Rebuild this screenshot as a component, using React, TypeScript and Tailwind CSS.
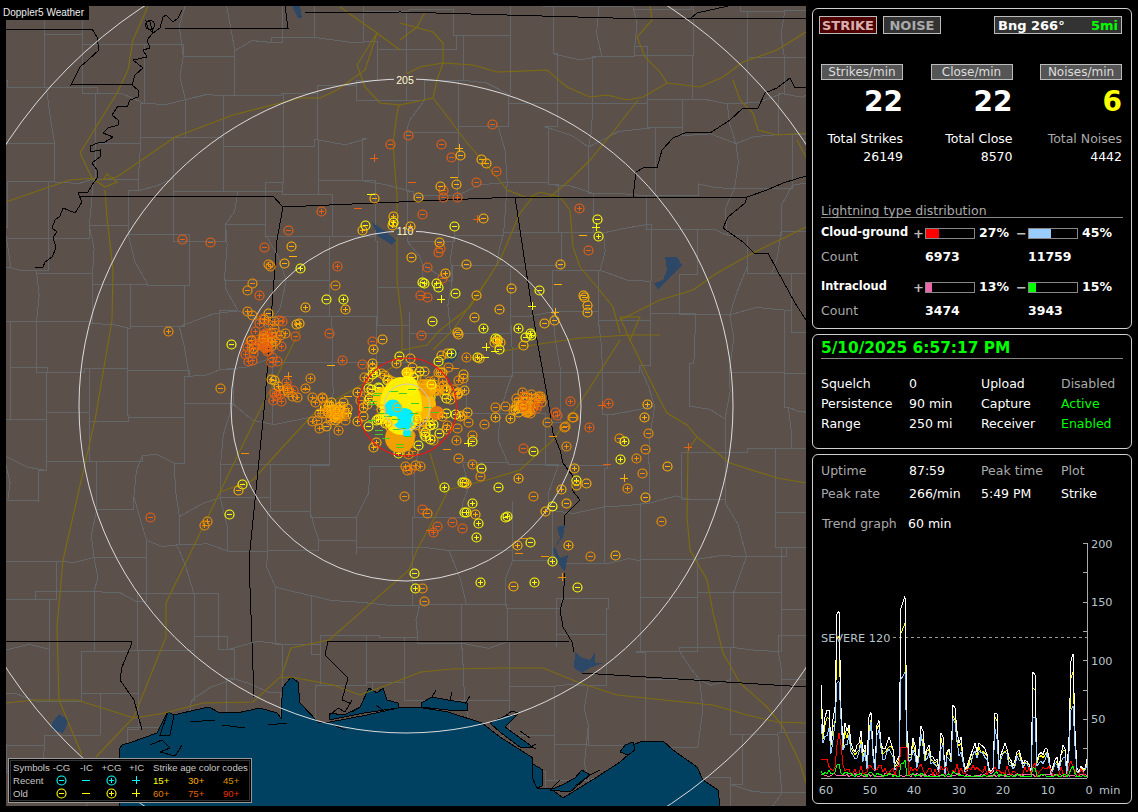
import React from "react";

type Mark = [number, number, string, string];

// simple seeded random so the picture stays the same
function rng(seed: number) {
  let s = seed;
  return () => {
    s = (s + 0x6d2b79f5) | 0;
    let t = Math.imul(s ^ (s >>> 15), 1 | s);
    t = (t + Math.imul(t ^ (t >>> 7), 61 | t)) ^ t;
    return ((t ^ (t >>> 14)) >>> 0) / 4294967296;
  };
}

const COLORS: Record<string, string> = {
  Y: "#ffff00",
  G: "#ffb000",
  O: "#f09000",
  R: "#e86010",
  C: "#00ffff",
};

const MARKS_RAW =
  // far north and west
  "390,144,m,R 374,158,c,R 358,208,d,R 321,211,p,R 288,230,m,R 264,247,m,R 210,242,m,R 182,239,m,R 268,264,p,O 270,266,p,O 337,266,p,R 291,246,m,G 293,256,d,G 284,263,m,G 374,198,m,G 362,230,p,G 393,216,p,G 392,225,p,G 371,194,d,Y 300,268,p,Y 365,225,m,Y 393,222,p,Y " +
  // north of the core
  "492,124,m,R 408,135,m,R 441,144,m,R 451,157,m,R 496,171,m,R 412,182,d,R 476,182,m,R 443,190,m,R 443,197,m,R 457,197,p,R 422,214,m,R 477,219,c,R 438,252,m,R 440,248,m,R 427,267,m,R 442,278,m,R 420,295,m,R 427,297,m,R 421,335,m,R 579,208,p,R 588,250,m,R " +
  "459,148,c,G 460,155,m,G 481,159,m,G 486,163,m,G 454,177,d,G 456,184,m,G 440,186,m,G 418,197,m,G 483,218,m,G 410,226,p,G 439,242,m,G 411,257,m,G 466,264,m,G 445,273,p,G 476,295,m,G 511,288,m,G 560,264,m,G 558,284,d,G 583,235,d,G 583,295,m,G 584,297,m,G 587,305,m,G 587,312,m,G 554,320,m,G 555,312,c,G 544,323,m,G 474,317,m,G 499,309,m,G 457,332,m,G 458,334,m,G " +
  "454,226,m,Y 422,282,m,Y 424,283,p,Y 436,283,p,Y 438,287,m,Y 455,293,m,Y 441,299,c,Y 539,290,m,Y 532,306,c,Y 597,219,m,Y 596,227,c,Y 598,236,p,Y 432,321,m,Y 483,328,p,Y 518,328,p,Y 530,333,p,Y 531,335,p,Y 525,337,m,Y 495,338,p,Y 497,339,p,Y " +
  // left side
  "247,290,m,O 252,283,m,O 259,295,p,R 268,313,m,G 263,318,m,R 247,311,p,O 252,315,m,O 282,321,p,R 296,324,p,G 299,323,p,G 329,333,m,R 295,336,m,R 285,333,p,O 231,344,m,Y 277,361,m,R 248,361,p,R 372,341,m,R 373,349,p,G 342,360,p,R 331,365,d,G 310,378,p,O 288,376,c,O 220,388,m,O 306,389,d,O 273,400,p,R 297,397,p,O 326,299,m,Y 343,299,p,Y 305,307,p,G 345,309,p,G 168,331,p,O " +
  "320,410,c,Y 348,413,c,Y 326,426,m,G 357,392,p,G 348,396,d,G 312,397,p,O 322,397,p,O 315,402,p,O 325,405,m,O 328,412,p,O 330,420,m,O 362,364,m,R 372,363,p,G 372,368,m,G 364,377,m,O 381,373,m,O 363,407,p,G 367,404,p,G 363,416,m,G 360,400,m,O " +
  // right side
  "495,407,m,O 505,406,m,O 495,417,p,G 513,410,m,O 510,418,p,G 540,398,m,O 570,401,p,R 557,415,p,R 555,412,m,R 547,422,m,O 572,417,m,O 565,426,m,O 553,436,d,O 566,446,p,O 533,451,m,Y 523,448,m,R 589,427,p,R 608,403,p,R 602,405,c,R " +
  "462,415,p,O 468,422,m,O 484,424,m,O 457,428,m,O 472,435,m,O 456,440,p,O 468,443,c,Y 447,449,d,O 458,458,m,O 472,464,p,O 481,468,m,Y 480,476,m,O 518,478,p,G 498,487,m,Y 462,482,p,Y 464,482,m,Y 466,483,p,G 444,487,p,Y 533,496,m,O " +
  "497,341,p,G 500,342,p,G 494,342,m,G 523,345,m,G 499,349,m,Y 486,347,c,Y 495,351,d,Y 477,357,p,Y 479,358,p,G 485,357,d,Y 466,357,p,O 447,353,p,G 441,355,m,G 438,361,m,Y 455,368,d,O 448,367,m,O " +
  // south east
  "647,404,p,G 644,417,p,G 648,433,m,O 619,438,m,O 624,441,p,Y 645,449,m,O 620,459,p,Y 636,458,p,O 607,464,d,R 667,466,m,G 642,473,m,O 624,478,c,G 627,488,p,O 645,497,m,G 661,521,m,O 688,447,c,R " +
  "573,417,m,O 564,427,m,O 574,468,p,G 576,480,p,Y 576,485,m,G 586,483,m,G 561,489,p,G 566,503,m,G 552,506,m,Y 545,511,p,G 507,516,p,Y 505,517,m,Y 517,545,p,G 530,542,m,Y 525,538,d,O 519,553,d,O 568,545,p,G 590,556,m,O 615,555,m,G 552,561,p,Y 545,556,d,O 562,577,c,O 577,587,m,Y 534,582,p,Y 513,586,m,G " +
  // south
  "414,573,m,Y 415,588,p,Y 422,588,m,O 424,601,m,O 480,582,p,Y 404,496,m,O 422,509,m,R 427,513,m,O 464,512,m,Y 466,512,p,Y 472,503,p,Y 475,514,p,G 452,522,m,R 462,528,m,R 478,523,p,Y 476,537,p,Y 437,526,m,R 433,532,p,R 430,530,d,R 229,514,m,Y 242,484,m,Y 238,490,m,G 245,453,d,O 405,466,p,O 410,469,p,R 415,465,p,O 420,466,p,O 407,470,m,O 204,525,p,O 207,521,p,O 150,517,m,R 413,451,m,O 439,433,m,Y 447,425,p,O 433,440,m,O 322,398,p,O 335,285,m,O";

const R = rng(42);
function gauss() {
  return (R() + R() + R() + R() - 2) / 0.58;
}

function buildMarks(): Mark[] {
  const out: Mark[] = MARKS_RAW.trim()
    .split(/\s+/)
    .map((s) => {
      const [x, y, t, c] = s.split(",");
      return [Number(x), Number(y), t, c];
    });
  const pick = (a: string[]) => a[Math.floor(R() * a.length)];
  const clusters: [number, number, number, number, string[]][] = [
    [263, 342, 9, 50, ["R", "R", "O"]],
    [281, 388, 8, 16, ["O", "R", "G"]],
    [337, 412, 5, 36, ["G", "G", "O"]],
    [326, 415, 6, 10, ["G", "O"]],
    [527, 405, 6, 34, ["O", "G", "O"]],
    [530, 400, 11, 8, ["O", "R"]],
    // ring of marks round the core
    [408, 405, 24, 110, ["G", "O", "G", "Y", "Y"]],
    [440, 385, 12, 16, ["G", "O"]],
  ];
  clusters.forEach(([x, y, sd, n, cols]) => {
    for (let i = 0; i < n; i++) out.push([x + gauss() * sd, y + gauss() * sd, pick(["m", "p"]), pick(cols)]);
  });
  return out;
}
const MARKS = buildMarks();

function Symbol({ x, y, t, c }: { x: number; y: number; t: string; c: string }) {
  return (
    <g stroke={c} strokeWidth={1} fill="none">
      {(t === "m" || t === "p") && <circle cx={x + 0.5} cy={y + 0.5} r={4.5} strokeWidth={1.15} shapeRendering="auto" />}
      {t === "m" && <line x1={x - 2} y1={y + 0.5} x2={x + 3} y2={y + 0.5} />}
      {t === "p" && (
        <>
          <line x1={x - 2} y1={y + 0.5} x2={x + 3} y2={y + 0.5} />
          <line x1={x + 0.5} y1={y - 2} x2={x + 0.5} y2={y + 3} />
        </>
      )}
      {t === "d" && <line x1={x - 4} y1={y + 0.5} x2={x + 4} y2={y + 0.5} />}
      {t === "c" && (
        <>
          <line x1={x - 4} y1={y + 0.5} x2={x + 4} y2={y + 0.5} />
          <line x1={x + 0.5} y1={y - 4} x2={x + 0.5} y2={y + 4} />
        </>
      )}
    </g>
  );
}

// county grid: jittered vertices joined with little steps
function countyPaths() {
  const r = rng(7);
  const step = 46;
  const n = 18;
  const pts: [number, number][][] = [];
  for (let j = 0; j <= n; j++) {
    const row: [number, number][] = [];
    for (let i = 0; i <= n; i++) {
      row.push([i * step + (r() - 0.5) * 24, j * step + (r() - 0.5) * 24]);
    }
    pts.push(row);
  }
  const segs: string[] = [];
  const wiggle = (a: [number, number], b: [number, number]) => {
    if (r() < 0.12) return;
    const k = r();
    if (k < 0.3) {
      const mx = (a[0] + b[0]) / 2 + (r() - 0.5) * 12;
      const my = (a[1] + b[1]) / 2 + (r() - 0.5) * 12;
      segs.push(`M${a[0]} ${a[1]}L${mx} ${my}L${b[0]} ${b[1]}`);
    } else if (k < 0.65) {
      segs.push(`M${a[0]} ${a[1]}L${b[0]} ${a[1]}L${b[0]} ${b[1]}`);
    } else {
      segs.push(`M${a[0]} ${a[1]}L${a[0]} ${b[1]}L${b[0]} ${b[1]}`);
    }
  };
  for (let j = 0; j <= n; j++) {
    for (let i = 0; i <= n; i++) {
      if (i < n) wiggle(pts[j][i], pts[j][i + 1]);
      if (j < n) wiggle(pts[j][i], pts[j + 1][i]);
    }
  }
  return segs.join("");
}
const COUNTIES = countyPaths();

const BORDERS = [
  "M6 29L92 29L97 37L99 50L88 60L80 67L71 85L101 84L132 84",
  "M165 28L288 28L285 6",
  "M305 13L400 12L613 18L806 18",
  "M690 19L697 13L728 6",
  "M80 196L273 196L283 207L515 197L747 197L767 190L783 183L806 176",
  "M283 207L277 240L265 400L249 560L254 697",
  "M515 197L520 230L528 283L537 340L548 400L553 433L560 450L563 463L572 475L572 490L580 500L565 515L564 525",
  "M565 573L563 600L560 610L563 627L572 642L574 652",
  "M328 641L500 642L570 641",
  "M582 673L806 687",
  "M6 641L131 641L132 643L122 667L120 680L134 700L142 730",
  "M328 641L325 655L337 667L348 678L342 700L350 703",
  "M633 197L636 172L645 167L657 168L662 150L673 138L687 132L710 133L730 120L743 108L758 108L765 93L777 88L790 78L795 88L806 87",
  "M747 197L745 203L728 217L723 228L743 242L755 254L768 253L777 270L795 303L806 320",
];

const RIVER =
  "M182 10L178 18L173 22L166 15L163 17L160 28L153 33L150 22L146 21L148 28L153 33L147 40L150 48L143 50L147 57L133 60L138 64L143 68L135 75L132 85L138 90L138 97L130 100L127 107L118 106L112 115L118 120L118 125L108 128L103 133L113 137L105 142L98 143L90 146L90 152L100 150L100 157L92 163L97 170L98 177L92 185L88 192L78 193L82 202L75 213L63 208L60 216L55 220L52 228L57 232L53 237L56 248L52 257L45 262L43 267L35 268";

const HIGHWAYS = [
  "M400 77L420 67L443 63L473 65L497 72L547 70L567 87L590 97L607 95L627 100L643 97L667 83L700 87L723 77L743 62L777 50L806 32",
  "M650 6L652 20L637 37L645 57L660 72L667 83",
  "M638 100L617 127L590 160L570 180L550 197L533 197L520 213L500 260L470 307L440 330L427 345L402 350",
  "M425 12L417 27L400 40M400 23L433 32L443 43L443 63L437 80L433 98L400 105M433 98L450 120L467 143L497 177L507 190L528 198L540 192L560 197L570 210L573 247L580 267L597 287L613 307L620 333",
  "M620 320L660 300L693 290L717 273L753 253L806 227",
  "M733 80L740 100L753 113L758 130L777 135L806 133M797 140L806 157",
  "M620 317L640 317L630 340L620 317",
  "M487 280L453 330L433 350M220 492L253 480L280 450L317 410L393 367L402 350",
  "M500 352L533 345L580 338L630 335L660 335",
  "M397 280L402 323L402 350",
  "M430 453L440 487L447 493L437 513L417 550L409 570L329 640L291 648L281 677",
  "M447 490L487 480L520 470L553 440L582 400L620 340",
  "M630 340L650 380L660 400L667 413L687 425L697 437L688 450L687 517L690 550L707 580L713 613L723 653L740 683L767 707L783 727L800 763L806 783",
  "M697 437L730 463L777 478L806 483",
  "M6 703L34 700L77 700L134 718L165 713L203 703L253 702L279 678L291 677L333 685L360 695L387 685L421 672L452 669L500 668L543 668L580 683L617 695L683 702L713 705L747 715L777 722L806 723",
  "M63 560L57 627L59 700L82 755",
  "M187 560L166 603L166 637L134 717L96 757",
  "M6 202L40 190L70 180L95 178",
  "M100 180L117 177L175 137L233 115L300 98L320 98L337 90L365 70L377 33",
  "M148 6L133 40L128 70L117 93L80 153L92 178L105 187L117 182L107 174L103 180M105 190L107 217L113 270L112 320L95 420L63 560",
  "M340 7L377 33L400 50M377 33L357 65L365 87L380 103L400 105L398 107L393 143L397 197L397 280",
  "M300 330L250 430L187 560",
];

const SEA =
  "M119 806L119 750L122 745L132 742L157 733L165 717L168 712L174 715L195 710L209 707L218 712L237 713L260 708L277 713L281 718L281 710L283 687L291 677L298 682L300 703L318 722L325 723L367 715L398 708L417 707L448 712L482 723L500 737L533 758L532 777L537 788L550 788L563 798L597 777L620 762L628 755L628 747L640 742L663 741L673 750L697 767L703 780L718 790L720 806Z";

const BAYS = [
  "M329 720L329 713L344 715L360 707L369 688L377 693L383 688L387 700L398 703L398 708L364 713Z",
  "M421 707L421 703L432 697L448 700L467 703L467 710L448 710Z",
  "M490 723L505 716L517 715L505 727L534 748L520 747L501 733Z",
  "M533 764L543 770L542 786L537 788L532 777Z",
  "M160 735L168 712L174 715L170 735Z",
  "M550 790L562 785L575 778L582 770L590 775L570 792Z",
  "M628 755L620 752L625 745L633 742L635 750Z",
];

const COAST_BITS = [
  "M222 725L245 728M268 725L287 723M150 745L162 740L170 748L160 752L175 756L182 745L178 752M190 722L215 720M332 724L345 730",
  "M329 716L338 708L345 712L352 700M360 707L352 712M376 705L385 712M432 697L436 690M450 700L452 692M465 704L470 696M505 716L512 711L518 713M520 731L530 738M528 748L536 744M550 790L560 780M575 786L590 775L600 770",
];

const LAKES = [
  "M665 257L677 257L682 265L670 277L658 290L654 283L663 280L667 270Z",
  "M52 723L59 714L69 720L63 733L52 730Z",
  "M372 222L386 232L396 240L392 245L378 236Z",
  "M452 352L459 350L457 358L450 364L444 362Z",
  "M557 527L565 525L563 537L555 547L560 558L568 555L565 572L558 563L553 550L560 538Z",
  "M575 652L580 657L590 660L595 652L595 663L603 663L590 668L582 673L574 668Z",
  "M292 6L300 6L302 18L298 18Z",
];

const WHITE = [
  80, 38, 52, 58, 58, 30, 50, 60, 140, 142, 60, 30, 47, 40, 45, 30, 25, 22, 28, 30, 40, 22, 28, 12, 52, 56, 25, 8, 45, 49, 30, 25, 25, 30, 35, 30,
  25, 12, 15, 18, 145, 150, 155, 40, 20, 20, 34, 28, 12, 25, 44, 40, 20, 25, 28, 18, 18, 15, 16, 8, 38, 35, 5, 22, 25, 18, 62, 60, 40, 30, 35, 18,
  8, 10, 15, 20, 25, 30, 22, 30, 28, 27, 25, 20, 8, 5, 8, 55, 55, 10, 20, 25, 30, 25, 18, 15, 10, 15, 22, 24, 18, 12, 15, 14, 12, 5, 90, 88, 15, 20,
  22, 20, 25, 25, 18, 5, 10, 15, 18, 8, 20, 28, 25, 5, 35, 100, 106, 40, 8, 5, 10, 8, 8, 16,
];

const X0 = 822;
const Y0 = 777;
const sx = (i: number) => X0 + (i * 266) / (WHITE.length - 1);
const sy = (v: number) => Y0 - v * 1.173;
const line = (vals: number[]) => vals.map((v, i) => `${sx(i).toFixed(1)},${sy(v).toFixed(1)}`).join(" ");

const r2 = rng(11);
const YELLOW = WHITE.map((v) => (v > 70 ? v * 0.85 : v * (0.75 + r2() * 0.22)));
const BLUE = WHITE.map((v) => (v > 70 ? v * 0.58 : v * (0.6 + r2() * 0.25)));
const RED = WHITE.map((v, i) => {
  if (i > 7 && i < 11) return 38 - Math.abs(i - 9) * 10;
  if (i > 39 && i < 44) return 26;
  if (i < 4) return 16;
  return Math.max(1, r2() * 9 + v * 0.08);
});
const GREEN = WHITE.map((v) => Math.max(1, v * 0.09 + r2() * 3 - 1.5));
const PINK = WHITE.map(() => 1 + r2() * 3);

function Btn({ className, children }: { className: string; children: React.ReactNode }) {
  return <div className={`flex h-[18px] items-center border border-[#bbbbbb] text-[13px] font-bold leading-none ${className}`}>{children}</div>;
}

function StatCol({ head, big, bigColor, label, value, labelColor }: { head: string; big: string; bigColor: string; label: string; value: string; labelColor: string }) {
  return (
    <div className="flex w-[82px] flex-col items-end">
      <div className="flex h-[16px] w-full items-center justify-center border border-[#bbbbbb] bg-[#555555] text-[12px] leading-none text-[#dddddd]">{head}</div>
      <div className={`mt-[5px] h-[34px] text-[28px] font-bold leading-[34px] ${bigColor}`}>{big}</div>
      <div className={`mt-[11px] h-[18px] whitespace-nowrap text-[12.5px] leading-[18px] ${labelColor}`}>{label}</div>
      <div className="h-[18px] text-[12.5px] leading-[18px] text-white">{value}</div>
    </div>
  );
}

function Dist({ sign, pct, color, width }: { sign: string; pct: string; color: string; width: string }) {
  return (
    <div className="flex w-[103px] items-center">
      <span className="w-[13px] text-center text-[13px] font-bold leading-none text-[#bbbbbb]">{sign}</span>
      <div className="h-[11px] w-[50px] border border-[#888888]">
        <div className={`h-full ${color} ${width}`} />
      </div>
      <span className="ml-[4px] text-[12.5px] font-bold leading-none text-white">{pct}</span>
    </div>
  );
}

function TypeRows({ name, a, b, countA, countB }: { name: string; a: React.ReactNode; b: React.ReactNode; countA: string; countB: string }) {
  return (
    <div className="flex flex-col">
      <div className="flex h-[18px] items-center">
        <div className="w-[91px] whitespace-nowrap text-[11.4px] font-bold leading-none text-white">{name}</div>
        {a}
        {b}
      </div>
      <div className="mt-[6px] flex h-[18px] items-center text-[12.5px] font-bold leading-none">
        <div className="w-[104px] font-normal text-[#aaaaaa]">Count</div>
        <div className="w-[103px] text-white">{countA}</div>
        <div className="text-white">{countB}</div>
      </div>
    </div>
  );
}

function InfoRow({ cells, h }: { cells: [string, string][]; h: string }) {
  const widths = ["w-[88px]", "w-[72px]", "w-[80px]", ""];
  return (
    <div className={`flex items-center text-[12.5px] leading-none ${h}`}>
      {cells.map(([t, c], i) => (
        <div key={i} className={`whitespace-nowrap ${widths[i]} ${c}`}>
          {t}
        </div>
      ))}
    </div>
  );
}

function LegendSym({ t, c }: { t: string; c: string }) {
  return (
    <svg width="12" height="12" viewBox="0 0 12 12" className="mx-auto" shapeRendering="crispEdges">
      <Symbol x={5} y={5} t={t} c={c} />
    </svg>
  );
}

function Legend() {
  const label = "whitespace-nowrap text-[#c8c8c8]";
  return (
    <div className="absolute bottom-[3px] left-[2px] h-[45px] w-[244px] border border-[#999999] bg-black p-[1px] font-['Liberation_Sans',sans-serif] text-[9.6px] leading-[13px]">
      <div className="grid h-full grid-cols-[36px_25px_25px_25px_25px_35px_35px_25px] items-center border border-[#333333] pl-[2px]">
        <div className={label}>Symbols</div>
        <div className={`${label} text-center`}>-CG</div>
        <div className={`${label} text-center`}>-IC</div>
        <div className={`${label} text-center`}>+CG</div>
        <div className={`${label} text-center`}>+IC</div>
        <div className={`${label} col-span-3 pl-[4px]`}>Strike age color codes</div>
        <div className={label}>Recent</div>
        <LegendSym t="m" c="#00ffff" />
        <LegendSym t="d" c="#00ffff" />
        <LegendSym t="p" c="#00ffff" />
        <LegendSym t="c" c="#00ffff" />
        <div className="pl-[4px] text-[#ffff00]">15+</div>
        <div className="pl-[4px] text-[#ffb000]">30+</div>
        <div className="pl-[4px] text-[#d89000]">45+</div>
        <div className={label}>Old</div>
        <LegendSym t="m" c="#ffff00" />
        <LegendSym t="d" c="#ffff00" />
        <LegendSym t="p" c="#ffff00" />
        <LegendSym t="c" c="#ffff00" />
        <div className="pl-[4px] text-[#e08000]">60+</div>
        <div className="pl-[4px] text-[#e06000]">75+</div>
        <div className="pl-[4px] text-[#e83000]">90+</div>
      </div>
    </div>
  );
}

function RadarMap() {
  const r3 = rng(99);
  const greens = Array.from({ length: 24 }, () => {
    const a = r3() * Math.PI * 2;
    const d = Math.sqrt(r3()) * 36;
    return [402 + Math.cos(a) * d, 412 + Math.sin(a) * d];
  });
  const r4 = rng(5);
  // a few rings that sit on top of the solid core
  const top = Array.from({ length: 20 }, () => {
    const a = r4() * Math.PI * 2;
    const d = 14 + r4() * 24;
    return [418 + Math.cos(a) * d, 402 + Math.sin(a) * d];
  });
  return (
    <svg viewBox="6 6 800 800" className="block h-[800px] w-[800px]" shapeRendering="crispEdges">
      <rect x="6" y="6" width="800" height="800" fill="#5c504b" />
      <path d={COUNTIES} fill="none" stroke="#63676a" strokeWidth="1" />
      <path d={SEA} fill="#004060" stroke="#000000" strokeWidth="1" />
      {BAYS.map((d, i) => (
        <path key={i} d={d} fill="#004060" stroke="#000000" strokeWidth="1" />
      ))}
      {COAST_BITS.map((d, i) => (
        <path key={i} d={d} fill="none" stroke="#000000" strokeWidth="1" />
      ))}
      {LAKES.map((d, i) => (
        <path key={i} d={d} fill="#2c4866" />
      ))}
      {HIGHWAYS.map((d, i) => (
        <path key={i} d={d} fill="none" stroke="#7d6c10" strokeWidth="1.15" shapeRendering="auto" />
      ))}
      {BORDERS.map((d, i) => (
        <path key={i} d={d} fill="none" stroke="#000000" strokeWidth="1" />
      ))}
      <path d={RIVER} fill="none" stroke="#000000" strokeWidth="1" />
      <circle cx="150" cy="25" r="4.5" fill="none" stroke="#000000" />
      <g fill="none" stroke="#dcdcdc" strokeWidth="1" shapeRendering="auto">
        <circle cx="406" cy="406" r="478" />
        <circle cx="406" cy="406" r="327" />
        <circle cx="406" cy="406" r="175" />
      </g>
      <rect x="394" y="74" width="22" height="12" fill="#5c504b" />
      <rect x="394" y="225" width="22" height="12" fill="#5c504b" />
      <text x="405" y="84" textAnchor="middle" fontFamily="Liberation Sans, sans-serif" fontSize="10.5" fill="#ffffd0">205</text>
      <text x="405" y="235" textAnchor="middle" fontFamily="Liberation Sans, sans-serif" fontSize="10.5" fill="#ffffd0">110</text>
      {MARKS.map(([x, y, t, c], i) => (
        <Symbol key={i} x={Math.round(x)} y={Math.round(y)} t={t} c={COLORS[c]} />
      ))}
      {/* storm core */}
      <g shapeRendering="auto">
        <circle cx="400" cy="438" r="15" fill="#f0a000" />
        <circle cx="421" cy="405" r="15" fill="#ffb800" />
        <circle cx="437" cy="413" r="7" fill="#e87a10" />
        <circle cx="384" cy="398" r="11" fill="#ffc800" />
        <circle cx="428" cy="388" r="9" fill="#f0a000" />
        <ellipse cx="401" cy="406" rx="21" ry="29" fill="#ffee00" />
        <circle cx="408" cy="373" r="6" fill="#ffc000" />
        <circle cx="408" cy="386" r="10" fill="#ffee00" />
        <circle cx="393" cy="408" r="8.5" fill="#00eeff" />
        <circle cx="404" cy="419" r="11" fill="#00eeff" />
        <circle cx="407" cy="433" r="4" fill="#00eeff" />
        <circle cx="394" cy="420" r="4" fill="#ffee00" />
      </g>
      {top.map(([x, y], i) => (
        <Symbol key={i} x={Math.round(x)} y={Math.round(y)} t={i % 2 ? "m" : "p"} c={i % 3 ? "#ffb000" : "#ffff00"} />
      ))}
      {greens.map(([x, y], i) => (
        <Symbol key={i} x={Math.round(x)} y={Math.round(y)} t="d" c="#40d020" />
      ))}
      <circle cx="407" cy="407" r="23" fill="none" stroke="#c8c8c8" strokeWidth="1" shapeRendering="auto" />
      <circle cx="407.5" cy="407" r="49" fill="none" stroke="#ff1010" strokeWidth="1.2" shapeRendering="auto" />
    </svg>
  );
}

function Trend() {
  const ticks = [0, 25, 50, 75, 100, 125, 150, 175, 200];
  const font = { fontFamily: "DejaVu Sans, sans-serif", fontSize: 11.3, fill: "#b8c4cc" };
  return (
    <svg viewBox="814 534 316 266" className="block h-[266px] w-[316px]">
      <g strokeWidth="1" fill="none" shapeRendering="crispEdges">
        <line x1="1088" y1="542" x2="1088" y2="777" stroke="#aaaaaa" />
        {ticks.map((v) => (
          <line key={v} x1="1084" y1={sy(v)} x2="1088" y2={sy(v)} stroke="#aaaaaa" />
        ))}
        <line x1="822" y1="777" x2="1088" y2="777" stroke="#aaaaaa" />
        <line x1="894" y1="636" x2="1088" y2="636" stroke="#999999" strokeDasharray="3 3" />
      </g>
      <g fill="none" strokeWidth="1" shapeRendering="crispEdges">
        <polyline points={line(YELLOW)} stroke="#ffff00" />
        <polyline points={line(WHITE)} stroke="#ffffff" />
        <polyline points={line(BLUE)} stroke="#99ccff" />
        <polyline points={line(PINK)} stroke="#ff66aa" />
        <polyline points={line(RED)} stroke="#ff0000" />
        <polyline points={line(GREEN)} stroke="#00ff00" />
      </g>
      <text x="822" y="641" {...font}>SEVERE 120</text>
      <text x="1092" y="547" {...font}>200</text>
      <text x="1092" y="605" {...font}>150</text>
      <text x="1092" y="664" {...font}>100</text>
      <text x="1092" y="722" {...font}>50</text>
      {[["60", 827], ["50", 871], ["40", 915], ["30", 960], ["20", 1004], ["10", 1049], ["0", 1090]].map(([t, x]) => (
        <text key={t} x={x} y="793" textAnchor="middle" {...font}>{t}</text>
      ))}
      <text x="1100" y="793" {...font}>min</text>
    </svg>
  );
}

export default function App() {
  const panel = "rounded-[6px] border border-[#d0d0d0] bg-black";
  return (
    <div className="flex h-[812px] w-[1138px] overflow-hidden bg-black font-['DejaVu_Sans',sans-serif] text-white">
      <div className="relative ml-[6px] mt-[6px] h-[800px] w-[800px] shrink-0">
        <RadarMap />
        <div className="absolute -left-[6px] -top-[6px] flex h-[20px] w-[89px] items-end justify-end bg-black pb-[1px] pr-[5px] font-['Liberation_Sans',sans-serif] text-[10px] leading-[12px] text-[#eeeeee]">
          Doppler5 Weather
        </div>
        <Legend />
      </div>

      <div className="ml-[6px] mt-[8px] flex w-[320px] shrink-0 flex-col gap-[5px]">
        {/* counters */}
        <div className={`${panel} h-[321px] px-[8px] pt-[7px]`}>
          <div className="flex">
            <Btn className="-ml-[2px] w-[58px] justify-center bg-[#500000] text-[#d8b0b0]">STRIKE</Btn>
            <Btn className="ml-[6px] w-[58px] justify-center bg-[#333333] text-[#aaaaaa]">NOISE</Btn>
            <Btn className="ml-[53px] w-[128px] justify-between bg-[#333333] px-[3px] text-white">
              <span>Bng 266°</span>
              <span className="text-[#00ff00]">5mi</span>
            </Btn>
          </div>
          <div className="mt-[30px] flex justify-between pr-[1px]">
            <StatCol head="Strikes/min" big="22" bigColor="text-white" label="Total Strikes" value="26149" labelColor="text-white" />
            <StatCol head="Close/min" big="22" bigColor="text-white" label="Total Close" value="8570" labelColor="text-white" />
            <StatCol head="Noises/min" big="6" bigColor="text-[#ffff00]" label="Total Noises" value="4442" labelColor="text-[#aaaaaa]" />
          </div>
          <div className="mt-[37px] h-[15px] border-b border-[#888888] text-[12.5px] leading-[15px] text-[#aaaaaa]">Lightning type distribution</div>
          <div className="mt-[6px]">
            <TypeRows
              name="Cloud-ground"
              a={<Dist sign="+" pct="27%" color="bg-[#ff0000]" width="w-[27%]" />}
              b={<Dist sign="−" pct="45%" color="bg-[#99ccff]" width="w-[45%]" />}
              countA="6973"
              countB="11759"
            />
          </div>
          <div className="mt-[12px]">
            <TypeRows
              name="Intracloud"
              a={<Dist sign="+" pct="13%" color="bg-[#ee66aa]" width="w-[13%]" />}
              b={<Dist sign="−" pct="15%" color="bg-[#00ff00]" width="w-[15%]" />}
              countA="3474"
              countB="3943"
            />
          </div>
        </div>

        {/* status */}
        <div className={`${panel} h-[115px] px-[8px] pt-[4px]`}>
          <div className="h-[20px] border-b border-[#888888] text-[15.4px] font-bold leading-[18px] text-[#00ff00]">5/10/2025 6:57:17 PM</div>
          <div className="mt-[15px]">
            <InfoRow h="h-[20px]" cells={[["Squelch", "text-white"], ["0", "text-white"], ["Upload", "text-white"], ["Disabled", "text-[#aaaaaa]"]]} />
            <InfoRow h="h-[20px]" cells={[["Persistence", "text-white"], ["90 min", "text-white"], ["Capture", "text-white"], ["Active", "text-[#00ff00]"]]} />
            <InfoRow h="h-[20px]" cells={[["Range", "text-white"], ["250 mi", "text-white"], ["Receiver", "text-white"], ["Enabled", "text-[#00ff00]"]]} />
          </div>
        </div>

        {/* trend */}
        <div className={`${panel} h-[350px] pt-[6px]`}>
          <div className="px-[8px]">
            <InfoRow h="h-[20px]" cells={[["Uptime", "text-[#aaaaaa]"], ["87:59", "text-white"], ["Peak time", "text-[#aaaaaa]"], ["Plot", "text-[#aaaaaa]"]]} />
            <InfoRow h="h-[26px]" cells={[["Peak rate", "text-[#aaaaaa]"], ["266/min", "text-white"], ["5:49 PM", "text-white"], ["Strike", "text-white"]]} />
            <div className="mt-[7px] flex h-[20px] items-center text-[12.5px] leading-none">
              <span className="w-[87px] pl-[1px] text-[#aaaaaa]">Trend graph</span>
              <span>60 min</span>
            </div>
          </div>
          <div className="mt-[1px]">
            <Trend />
          </div>
        </div>
      </div>
    </div>
  );
}
